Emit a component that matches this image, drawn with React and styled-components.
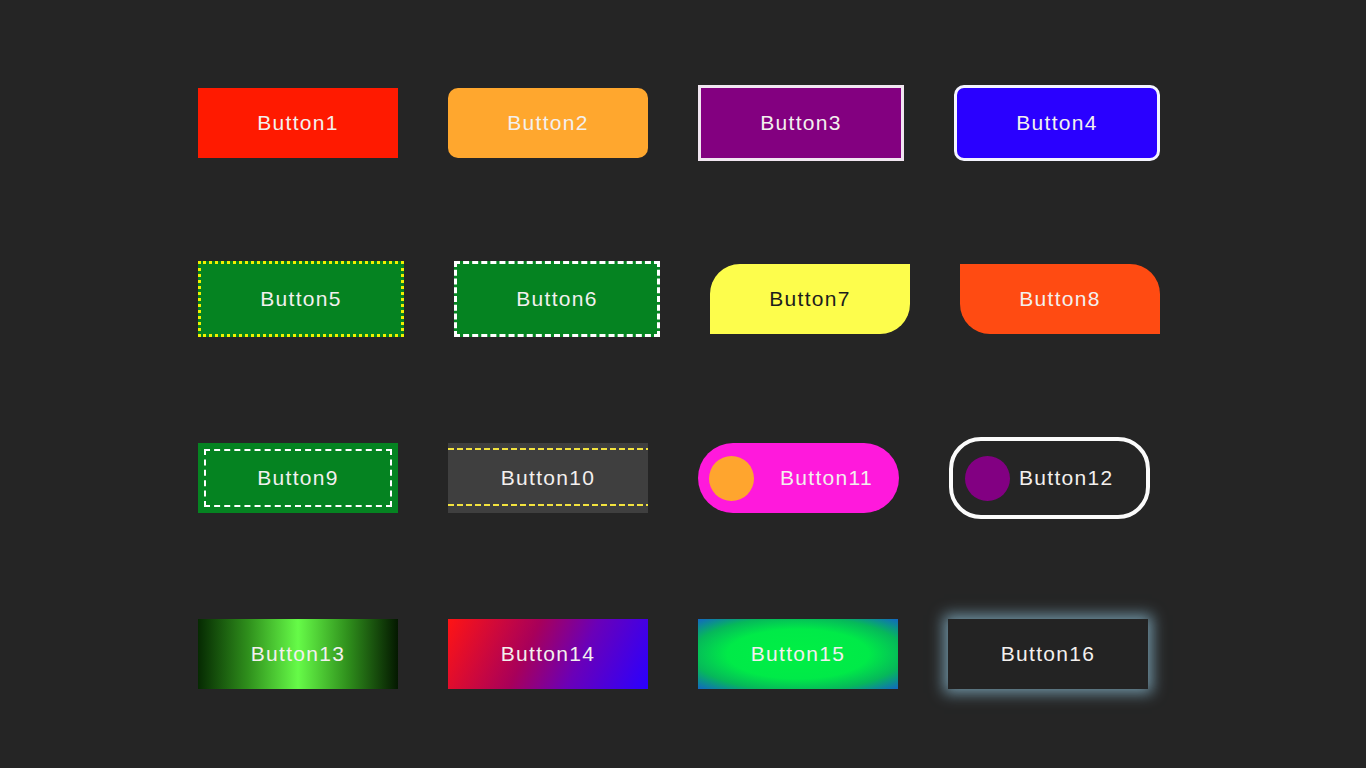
import React from "react";
import styled, { createGlobalStyle, css } from "styled-components";

const GlobalStyle = createGlobalStyle`
    html, body {
        margin: 0;
        padding: 0;
        background: #252525;
        font-family: "Liberation Sans", Arial, sans-serif;
    }
`;

const Page = styled.div`
    width: 100vw;
    height: 100vh;
    box-sizing: border-box;
    padding: 85px 0 0 198px;
    display: flex;
    flex-direction: column;
    gap: 100px;
    overflow: hidden;
`;

const Row = styled.div`
    display: flex;
    align-items: center;
    gap: 50px;
`;

const Button = styled.button`
    box-sizing: content-box;
    width: 200px;
    height: 70px;
    flex: none;
    border: none;
    padding: 0;
    outline: none;
    display: flex;
    align-items: center;
    justify-content: center;
    font-family: "Liberation Sans", Arial, sans-serif;
    font-size: 21px;
    letter-spacing: 1.3px;
    color: ${(p) => p.$color || "#f3f0ee"};
    background: ${(p) => p.$bg || "#252525"};
    cursor: pointer;
    ${(p) => p.$extra && css`${p.$extra}`}
`;

const Dot = styled.span`
    width: 45px;
    height: 45px;
    flex: none;
    border-radius: 50%;
    background: ${(p) => p.$bg};
`;

const Label = styled.span`
    flex: ${(p) => (p.$grow ? 1 : "none")};
    text-align: center;
`;

const PillButton = styled(Button)`
    box-sizing: border-box;
    width: 201px;
    border-radius: 35px;
    justify-content: flex-start;
    padding-left: 11px;
    background: #ff19dc;
`;

const RingButton = styled(Button)`
    box-sizing: border-box;
    width: 201px;
    height: 82px;
    border: 4px solid #fbfbfb;
    border-radius: 32px;
    justify-content: flex-start;
    padding-left: 12px;
    gap: 9px;
    background: #252525;
`;

const dashLine = "repeating-linear-gradient(90deg, #f2e23e 0 6px, transparent 6px 9px)";

const styles = {
    b3: "border: 3px solid #f1e6f1;",
    b4: "border: 3px solid #f4f4ff; border-radius: 10px;",
    b5: "border: 3px dotted #f0f000;",
    b6: "border: 3px dashed #ffffff;",
    b7: "border-radius: 30px 0 30px 0;",
    b8: "border-radius: 0 30px 0 30px;",
    b9: "outline: 2px dashed #ffffff; outline-offset: -8px;",
    b10: `background:
        ${dashLine} 0 5px / 100% 2px no-repeat,
        ${dashLine} 0 calc(100% - 7px) / 100% 2px no-repeat,
        #3f3f3f;`,
    b16: "box-shadow: 0 0 14px 4px rgba(140, 190, 212, 0.75);",
};

export default function App() {
    return (
        <>
            <GlobalStyle />
            <Page>
                <Row>
                    <Button $bg="#ff1a00">Button1</Button>
                    <Button $bg="#ffa72e" $extra="border-radius: 10px;">Button2</Button>
                    <Button $bg="#830080" $extra={styles.b3}>Button3</Button>
                    <Button $bg="#2a00ff" $extra={styles.b4}>Button4</Button>
                </Row>
                <Row>
                    <Button $bg="#058321" $extra={styles.b5}>Button5</Button>
                    <Button $bg="#058321" $extra={styles.b6}>Button6</Button>
                    <Button $bg="#fdfd4c" $color="#1c1c1c" $extra={styles.b7}>Button7</Button>
                    <Button $bg="#ff4b12" $extra={styles.b8}>Button8</Button>
                </Row>
                <Row>
                    <Button $bg="#058321" $extra={styles.b9}>Button9</Button>
                    <Button $extra={styles.b10}>Button10</Button>
                    <PillButton>
                        <Dot $bg="#ffa52e" />
                        <Label $grow>Button11</Label>
                    </PillButton>
                    <RingButton>
                        <Dot $bg="#820082" />
                        <Label>Button12</Label>
                    </RingButton>
                </Row>
                <Row>
                    <Button $bg="linear-gradient(90deg, #062a02 0%, #2f8f1c 25%, #66fb48 50%, #2f8f1c 75%, #041800 100%)">
                        Button13
                    </Button>
                    <Button $bg="linear-gradient(115deg, #ff1414 0%, #a8005a 40%, #6a00b8 65%, #2a00ff 100%)">
                        Button14
                    </Button>
                    <Button $bg="radial-gradient(ellipse at center, #00f044 0%, #00ea48 50%, #06b85a 75%, #1266c4 100%)">
                        Button15
                    </Button>
                    <Button $bg="#232323" $extra={styles.b16}>Button16</Button>
                </Row>
            </Page>
        </>
    );
}
